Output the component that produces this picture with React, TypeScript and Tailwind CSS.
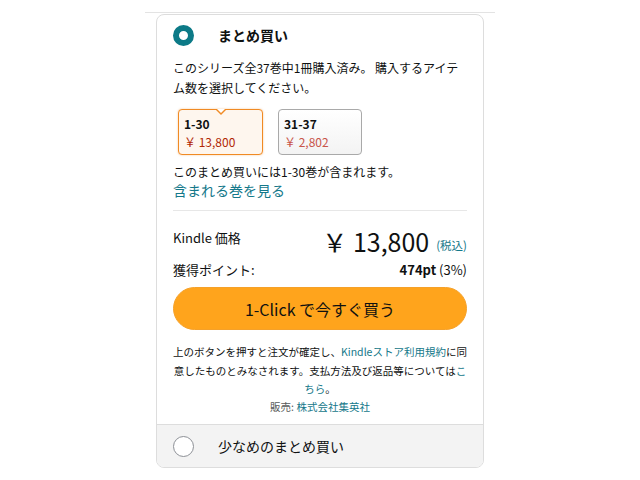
import React from "react";

const F = { fontFamily: '"Noto Sans CJK JP", "Noto Sans", sans-serif' };

export default function App() {
  return (
    <div className="w-[640px] h-[480px] bg-white relative overflow-hidden text-[#0f1111]" style={F}>
      <div className="ml-[145px] w-[350px] h-[13px] border-b border-[#e3e3e3]" />
      <div className="ml-[156px] mt-[1px] w-[328px] h-[454px] border border-[#dddddd] rounded-[8px] flex flex-col overflow-hidden">
        <div className="flex-1 px-4 flex flex-col">
          {/* header */}
          <div className="flex items-center h-[20px] mt-[10px]">
            <div className="w-[21px] h-[21px] rounded-full border-[6.5px] border-[#0c7a87] bg-white" />
            <div className="ml-[24px] text-[14px] font-bold leading-[20px]">まとめ買い</div>
          </div>
          <div className="mt-[13px] text-[12px] leading-[20px] whitespace-nowrap">
            <div>このシリーズ全37巻中1冊購入済み。 購入するアイテ</div>
            <div>ム数を選択してください。</div>
          </div>
          {/* boxes */}
          <div className="mt-[11px] ml-[5px] flex gap-[15px] h-[46px]">
            <div className="relative w-[85px] h-[46px] rounded-[4px] border-[1.5px] border-[#f08a24] bg-[#fef6ee] shadow-[0_0_2px_rgba(240,138,36,0.5)] px-[5px] pt-[5px]">
              <div className="absolute left-[36px] -top-[1.5px] w-0 h-0 border-l-[6px] border-r-[6px] border-t-[6px] border-l-transparent border-r-transparent border-t-[#f08a24]" />
              <div className="absolute left-[38px] -top-[1.5px] w-0 h-0 border-l-[4px] border-r-[4px] border-t-[4px] border-l-transparent border-r-transparent border-t-white" />
              <div className="text-[12px] font-bold leading-[18px]">1-30</div>
              <div className="text-[12px] leading-[18px] text-[#b12704]">￥ 13,800</div>
            </div>
            <div className="w-[84px] h-[46px] rounded-[4px] border-[1.5px] border-[#a9a9a9] bg-gradient-to-b from-white to-[#f3f3f3] px-[5px] pt-[5px]">
              <div className="text-[12px] font-bold leading-[18px]">31-37</div>
              <div className="text-[12px] leading-[18px] text-[#c8554a]">￥ 2,802</div>
            </div>
          </div>
          <div className="mt-[8px] text-[12px] leading-[18px]">このまとめ買いには1-30巻が含まれます。</div>
          <div className="text-[14px] leading-[18px] text-[#14788a]">含まれる巻を見る</div>
          <div className="mt-[11px] h-px bg-[#e7e7e7]" />
          {/* price */}
          <div className="mt-[15px] flex justify-between items-start h-[30px]">
            <div className="mt-[3px] text-[13px] leading-[18px]">Kindle 価格</div>
            <div className="flex items-end">
              <span className="text-[25px] leading-[30px]">￥ 13,800</span>
              <span className="ml-[7px] mb-[2px] text-[11.5px] leading-[18px] text-[#14788a]">(税込)</span>
            </div>
          </div>
          <div className="mt-[5px] flex justify-between h-[18px] text-[13px] leading-[18px]">
            <span>獲得ポイント:</span>
            <span><span className="font-bold">474pt</span> (3%)</span>
          </div>
          <div className="mt-[8px] h-[43px] rounded-full bg-[#ffa41c] border border-[#f5a12a] flex items-center justify-center text-[16px]">
            1-Click で今すぐ買う
          </div>
          <div className="mt-[13px] text-center text-[10.5px] leading-[18.5px]">
            上のボタンを押すと注文が確定し、<span className="text-[#14788a]">Kindleストア利用規約</span>に同<br />
            意したものとみなされます。支払方法及び返品等については<span className="text-[#14788a]">こ</span><br />
            <span className="text-[#14788a]">ちら</span>。
          </div>
          <div className="text-center text-[10.5px] leading-[16px]">
            <span className="text-[#565959]">販売: </span><span className="text-[#14788a]">株式会社集英社</span>
          </div>
        </div>
        <div className="h-[43px] border-t border-[#dddddd] bg-[#f3f3f3] flex items-center px-4 shrink-0">
          <div className="w-[21px] h-[21px] rounded-full border border-[#8d9096] bg-white" />
          <div className="ml-[24px] text-[14px]">少なめのまとめ買い</div>
        </div>
      </div>
    </div>
  );
}
